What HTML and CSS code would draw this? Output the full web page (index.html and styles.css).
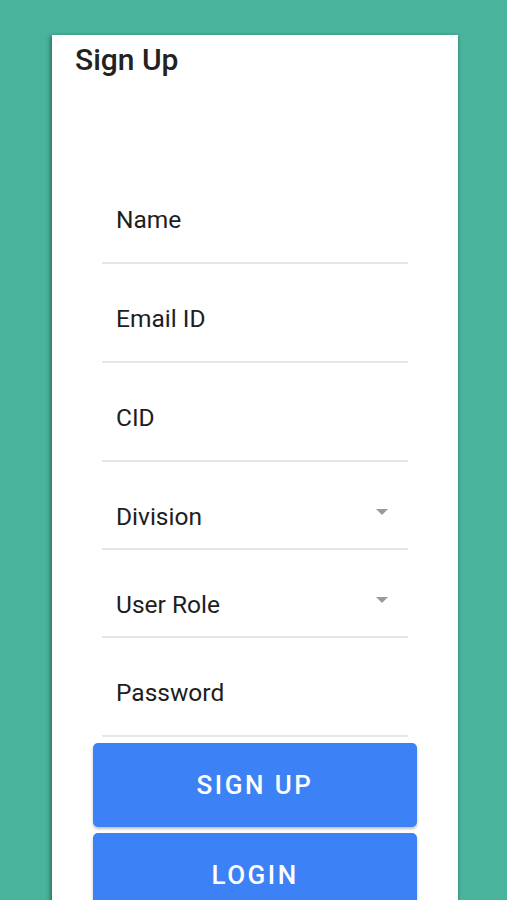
FILE: index.html
```html
<!DOCTYPE html>
<html>
<head>
<meta charset="utf-8">
<link rel="stylesheet" href="styles.css">
</head>
<body>
<div class="card">
  <h1 class="title">Sign Up</h1>
  <form class="form">
    <div class="field"><span class="label">Name</span></div>
    <div class="field"><span class="label">Email ID</span></div>
    <div class="field"><span class="label">CID</span></div>
    <div class="field select"><span class="label">Division</span><span class="arrow"></span></div>
    <div class="field select"><span class="label">User Role</span><span class="arrow"></span></div>
    <div class="field"><span class="label">Password</span></div>
  </form>
  <div class="buttons">
    <button class="btn" type="button">SIGN UP</button>
    <button class="btn" type="button">LOGIN</button>
  </div>
</div>
</body>
</html>
```
FILE: styles.css
```css
html, body {
  margin: 0;
  padding: 0;
  height: 100%;
  overflow: hidden;
}
body {
  background: #49b39c;
  font-family: Roboto, "Noto Sans", sans-serif;
}
.card {
  margin: 35px 0 0 52px;
  width: 406px;
  height: 900px;
  background: #fff;
  box-shadow: -2px 1px 4px rgba(0,0,0,0.35), 1px 1px 2px rgba(0,0,0,0.15);
}
.title {
  margin: 0;
  padding: 7px 0 0 23px;
  height: 123px;
  font-size: 30px;
  font-weight: 500;
  line-height: 36px;
  color: #222;
}
.form {
  margin-left: 50px;
  width: 306px;
}
.field {
  display: flex;
  align-items: center;
  height: 97px;
  padding: 0 20px 0 14px;
  border-bottom: 2px solid #e6e6e6;
  box-sizing: content-box;
}
.field .label {
  padding-top: 12px;
  font-size: 24.5px;
  color: #1e1e1e;
  flex: 1;
}
.field.select {
  height: 86px;
  padding-top: 0;
}
.field.select .label {
  padding-top: 22px;
}
.arrow {
  width: 0;
  height: 0;
  border-left: 6px solid transparent;
  border-right: 6px solid transparent;
  border-top: 6px solid #9a9a9a;
  margin-top: 14px;
}
.buttons {
  margin: 6px 0 0 41px;
  width: 324px;
  display: flex;
  flex-direction: column;
  gap: 6px;
}
.btn {
  height: 84px;
  border: none;
  border-radius: 5px;
  background: #3c82f6;
  color: #fff;
  font-family: Roboto, sans-serif;
  font-weight: 500;
  font-size: 26px;
  letter-spacing: 2.5px;
  box-shadow: 0 2px 3px rgba(0,0,0,0.25);
}
```
